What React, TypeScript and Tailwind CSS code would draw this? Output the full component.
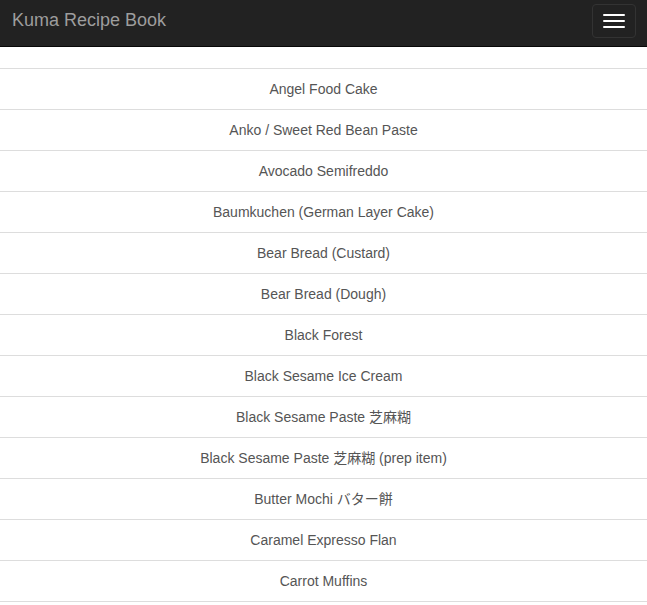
import React from 'react';

const recipes = [
  'Angel Food Cake',
  'Anko / Sweet Red Bean Paste',
  'Avocado Semifreddo',
  'Baumkuchen (German Layer Cake)',
  'Bear Bread (Custard)',
  'Bear Bread (Dough)',
  'Black Forest',
  'Black Sesame Ice Cream',
  'Black Sesame Paste 芝麻糊',
  'Black Sesame Paste 芝麻糊 (prep item)',
  'Butter Mochi バター餅',
  'Caramel Expresso Flan',
  'Carrot Muffins',
];

const App: React.FC = () => {
  return (
    <div
      className="min-h-screen bg-white"
      style={{ fontFamily: '"Liberation Sans", Arial, "Noto Sans CJK JP", sans-serif' }}
    >
      {/* Navbar */}
      <nav className="h-[47px] bg-[#222222] border-b border-[#080808] flex items-start justify-between">
        <a href="#" className="pl-[12px] pt-[10px] text-[18px] leading-[20px] text-[#9d9d9d]">
          Kuma Recipe Book
        </a>
        <button
          type="button"
          className="mt-[4px] mr-[11px] w-[44px] h-[34px] border border-[#333333] rounded-[4px] flex flex-col items-center justify-center gap-[4px]"
        >
          <span className="block w-[22px] h-[2px] rounded-[1px] bg-white" />
          <span className="block w-[22px] h-[2px] rounded-[1px] bg-white" />
          <span className="block w-[22px] h-[2px] rounded-[1px] bg-white" />
        </button>
      </nav>

      {/* Recipe list */}
      <div className="pt-[21px]">
        <ul className="border-t border-[#dddddd]">
          {recipes.map((name) => (
            <li key={name}>
              <a
                href="#"
                className="block h-[41px] py-[10px] px-[15px] border-b border-[#dddddd] text-center text-[14px] leading-[20px] text-[#555555]"
              >
                {name}
              </a>
            </li>
          ))}
        </ul>
      </div>
    </div>
  );
};

export default App;
